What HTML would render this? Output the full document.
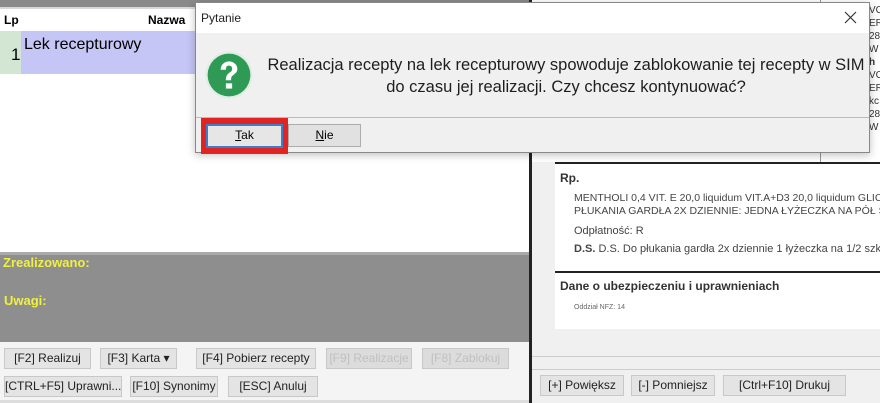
<!DOCTYPE html>
<html><head><meta charset="utf-8"><style>
*{margin:0;padding:0;box-sizing:border-box}
body{width:880px;height:403px;overflow:hidden;background:#fff;font-family:"Liberation Sans",sans-serif;position:relative}
.a{position:absolute}
.btn{position:absolute;height:21px;background:#e4e4e4;border:1px solid #c8c8c8;font-size:12px;color:#222;text-align:center;line-height:19px;white-space:nowrap}
.dis{color:#c0c0c0;background:#dcdcdc}
.sm{font-size:9px;color:#333;position:absolute;white-space:nowrap}
</style></head><body>
<div class="a" style="left:0;top:0;width:530px;height:7px;background:#8a8a8a"></div>
<div class="a" style="left:0;top:7px;width:530px;height:2px;background:#d8d8d8"></div>
<div class="a" style="left:4px;top:13px;font-size:12px;font-weight:bold">Lp</div>
<div class="a" style="left:148px;top:13px;font-size:12px;font-weight:bold">Nazwa</div>
<div class="a" style="left:0;top:31px;width:21px;height:43px;background:#d3e6d3"></div>
<div class="a" style="left:21px;top:31px;width:180px;height:43px;background:#c6c6f6"></div>
<div class="a" style="left:11px;top:45px;font-size:17px">1</div>
<div class="a" style="left:24px;top:36px;font-size:16px">Lek recepturowy</div>
<div class="a" style="left:0;top:252px;width:530px;height:3px;background:#aaa"></div>
<div class="a" style="left:0;top:255px;width:530px;height:87px;background:#8e8e8e"></div>
<div class="a" style="left:3px;top:255px;font-size:13px;font-weight:bold;color:#f0f040">Zrealizowano:</div>
<div class="a" style="left:4px;top:293px;font-size:13px;font-weight:bold;color:#f0f040">Uwagi:</div>
<div class="a" style="left:0;top:342px;width:530px;height:61px;background:#f4f4f4"></div>
<div class="btn" style="left:4px;top:348px;width:87px">[F2] Realizuj</div>
<div class="btn" style="left:100px;top:348px;width:77px">[F3] Karta ▾</div>
<div class="btn" style="left:196px;top:348px;width:120px">[F4] Pobierz recepty</div>
<div class="btn dis" style="left:326px;top:348px;width:86px">[F9] Realizacje</div>
<div class="btn dis" style="left:422px;top:348px;width:87px">[F8] Zablokuj</div>
<div class="btn" style="left:4px;top:376px;width:118px">[CTRL+F5] Uprawni...</div>
<div class="btn" style="left:130px;top:376px;width:88px">[F10] Synonimy</div>
<div class="btn" style="left:228px;top:376px;width:90px">[ESC] Anuluj</div>
<div class="a" style="left:0;top:400px;width:530px;height:3px;background:#ddd"></div>
<div class="a" style="left:529px;top:0;width:3px;height:403px;background:#222"></div>
<div class="a" style="left:532px;top:0;width:348px;height:403px;background:#f0f0f0"></div>
<div class="a" style="left:532px;top:0;width:348px;height:162px;background:#fff"></div>
<div class="a" style="left:820px;top:0;width:1px;height:162px;background:#999"></div>
<div class="sm" style="left:869px;top:4px;font-size:10px;line-height:13px">VC<br>ER<br>28<br>W<br><b>h</b><br>VC<br>ER<br>kc<br>28<br>W</div>
<div class="sm" style="left:836px;top:145px;font-size:9px">kontakt t</div>
<div class="a" style="left:555px;top:162px;width:325px;height:2px;background:#222"></div>
<div class="a" style="left:555px;top:164px;width:325px;height:165px;background:#fff"></div>
<div class="a" style="left:560px;top:171px;font-size:12px;font-weight:bold;color:#333">Rp.</div>
<div class="sm" style="left:574px;top:192px;font-size:10.5px;line-height:13px;color:#444">MENTHOLI 0,4 VIT. E 20,0 liquidum VIT.A+D3 20,0 liquidum GLIC<br>PŁUKANIA GARDŁA 2X DZIENNIE: JEDNA ŁYŻECZKA NA PÓŁ SZKL</div>
<div class="sm" style="left:574px;top:225px;font-size:11px;color:#444">Odpłatność: R</div>
<div class="sm" style="left:574px;top:243px;font-size:11px;color:#444"><b>D.S.</b> D.S. Do płukania gardła 2x dziennie 1 łyżeczka na 1/2 szklan</div>
<div class="a" style="left:555px;top:271px;width:325px;height:2px;background:#222"></div>
<div class="a" style="left:560px;top:279px;font-size:12px;font-weight:bold;color:#333">Dane o ubezpieczeniu i uprawnieniach</div>
<div class="sm" style="left:574px;top:304px;font-size:7px;color:#666">Oddział NFZ: 14</div>
<div class="a" style="left:532px;top:356px;width:348px;height:1px;background:#ccc"></div>
<div class="a" style="left:532px;top:369px;width:348px;height:1px;background:#ccc"></div>
<div class="btn" style="left:540px;top:375px;width:84px">[+] Powiększ</div>
<div class="btn" style="left:631px;top:375px;width:84px">[-] Pomniejsz</div>
<div class="btn" style="left:723px;top:375px;width:123px">[Ctrl+F10] Drukuj</div>
<div class="a" style="left:195px;top:2px;width:675px;height:151px;background:#f0f0f0;border:1px solid #888;box-shadow:0 2px 8px rgba(0,0,0,.25)">
 <div class="a" style="left:0;top:0;width:673px;height:30px;background:#fff"></div>
 <div class="a" style="left:5px;top:8px;font-size:12px;color:#222">Pytanie</div>
 <svg class="a" style="left:648px;top:8px" width="13" height="13" viewBox="0 0 13 13"><path d="M1 1L12 12M12 1L1 12" stroke="#333" stroke-width="1.2"/></svg>
 <svg class="a" style="left:9px;top:48px" width="48" height="48" viewBox="0 0 46 46"><circle cx="23" cy="23" r="22.5" fill="#dfeee3"/><circle cx="23" cy="23" r="20.5" fill="#2e9a56"/><path d="M15 18c0-5 4-8 8-8s8 3 8 7c0 4-3 5-5 7-1 1-1 2-1 4h-5c0-4 1-5 3-7 2-1 3-2 3-4s-1-3-3-3-3 1-3 4z" fill="#fff"/><rect x="20" y="31" width="6" height="5" fill="#fff"/></svg>
 <div class="a" style="left:66px;top:51px;width:608px;text-align:center;font-size:16.5px;line-height:22px;color:#1e1e1e">Realizacja recepty na lek recepturowy spowoduje zablokowanie tej recepty w SIM<br>do czasu jej realizacji. Czy chcesz kontynuować?</div>
 <div class="a" style="left:0;top:114px;width:673px;height:1px;background:#bbb"></div>
 <div class="a" style="left:5px;top:115px;width:87px;height:36px;background:#e02424"></div>
 <div class="a" style="left:10px;top:121px;width:77px;height:24px;background:#e6e6e6;border:2px solid #3c7fc8;font-size:12px;text-align:center;line-height:19px"><u>T</u>ak</div>
 <div class="a" style="left:92px;top:121px;width:73px;height:23px;background:#e1e1e1;border:1px solid #adadad;font-size:12px;text-align:center;line-height:21px"><u>N</u>ie</div>
</div>
</body></html>
